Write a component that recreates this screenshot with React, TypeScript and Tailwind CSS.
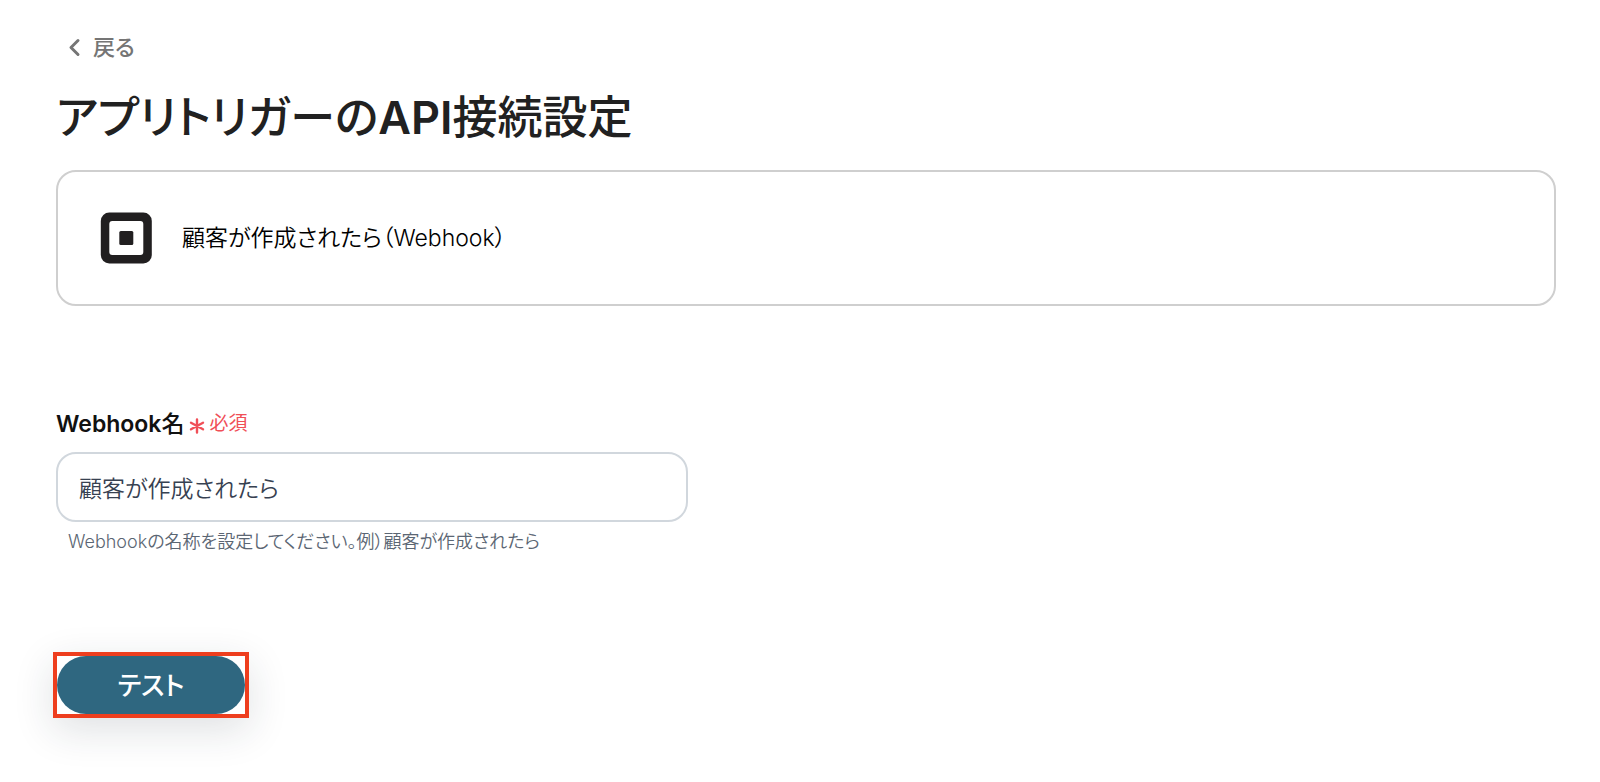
import { useState } from 'react';

function SquareLogo() {
  return (
    <svg viewBox="0 0 52 52" className="h-[52px] w-[52px] shrink-0" aria-hidden="true">
      <rect x="0.8" y="0.5" width="51" height="51" rx="8.5" fill="#211f20" />
      <rect x="9.3" y="9" width="34" height="34" rx="3" fill="#fff" />
      <rect x="19.3" y="19" width="14" height="14" rx="1.5" fill="#211f20" />
    </svg>
  );
}

function RequiredMark() {
  return (
    <svg viewBox="0 0 16 16" className="mt-1 h-4 w-4 shrink-0" fill="none" stroke="#f04f57" strokeWidth="2.4" strokeLinecap="round" aria-hidden="true">
      <path d="M8 1.5v13M2 4.7l12 6.6M14 4.7L2 11.3" />
    </svg>
  );
}

export default function App() {
  const [name, setName] = useState('顧客が作成されたら');

  return (
    <main
      lang="ja"
      className="bg-white pt-[31px] pr-11 pb-16 pl-14 font-['Inter','Noto_Sans_CJK_JP',sans-serif] text-[22px] [font-feature-settings:'palt']"
    >
      <button type="button" className="flex h-8 items-center gap-3 pl-[11px] font-medium text-[#757575]">
        <svg viewBox="0 0 14 20" className="h-5 w-3.5" fill="none" stroke="currentColor" strokeWidth="3" aria-hidden="true">
          <path d="M11 3.5L4 10.5l7 7" strokeLinecap="round" strokeLinejoin="round" />
        </svg>
        戻る
      </button>

      <h1 className="mt-[25px] text-[45px] leading-[60px] font-medium text-[#212121]">
        アプリトリガーの<span className="font-semibold">API</span>接続設定
      </h1>

      <section className="mt-[22px] flex items-center gap-[30px] rounded-[20px] border-2 border-[#cfcfcf] px-[42px] py-10">
        <SquareLogo />
        <p className="text-[23px] leading-8 font-[350] text-black">顧客が作成されたら（Webhook）</p>
      </section>

      <form className="mt-[102px]" onSubmit={(e) => e.preventDefault()}>
        <label htmlFor="webhook-name" className="flex h-8 items-center text-[23px] font-semibold text-[#111]">
          Webhook<span className="font-medium">名</span>
          <span className="ml-[5px] flex items-center gap-1 text-[19px] font-normal text-[#f04f57]">
            <RequiredMark />
            必須
          </span>
        </label>
        <input
          id="webhook-name"
          type="text"
          value={name}
          onChange={(e) => setName(e.target.value)}
          aria-describedby="webhook-name-hint"
          className="mt-3 block h-[70px] w-full max-w-[632px] rounded-[20px] border-2 border-[#d1d7dd] px-[21px] text-[23px] font-[350] text-[#374151] outline-none"
        />
        <p id="webhook-name-hint" className="mt-1 pl-3 text-lg leading-8 font-[350] text-[#5b6673]">
          Webhookの名称を設定してください。例）顧客が作成されたら
        </p>

        <div className="mt-[94px] -ml-[3px] inline-block border-4 border-[#ee3e1e] shadow-[0_12px_40px_rgba(30,41,59,0.14)]">
          <button
            type="submit"
            className="block h-[58px] w-[188px] rounded-full bg-[#2f6780] text-[26px] font-medium text-white"
          >
            テスト
          </button>
        </div>
      </form>
    </main>
  );
}
